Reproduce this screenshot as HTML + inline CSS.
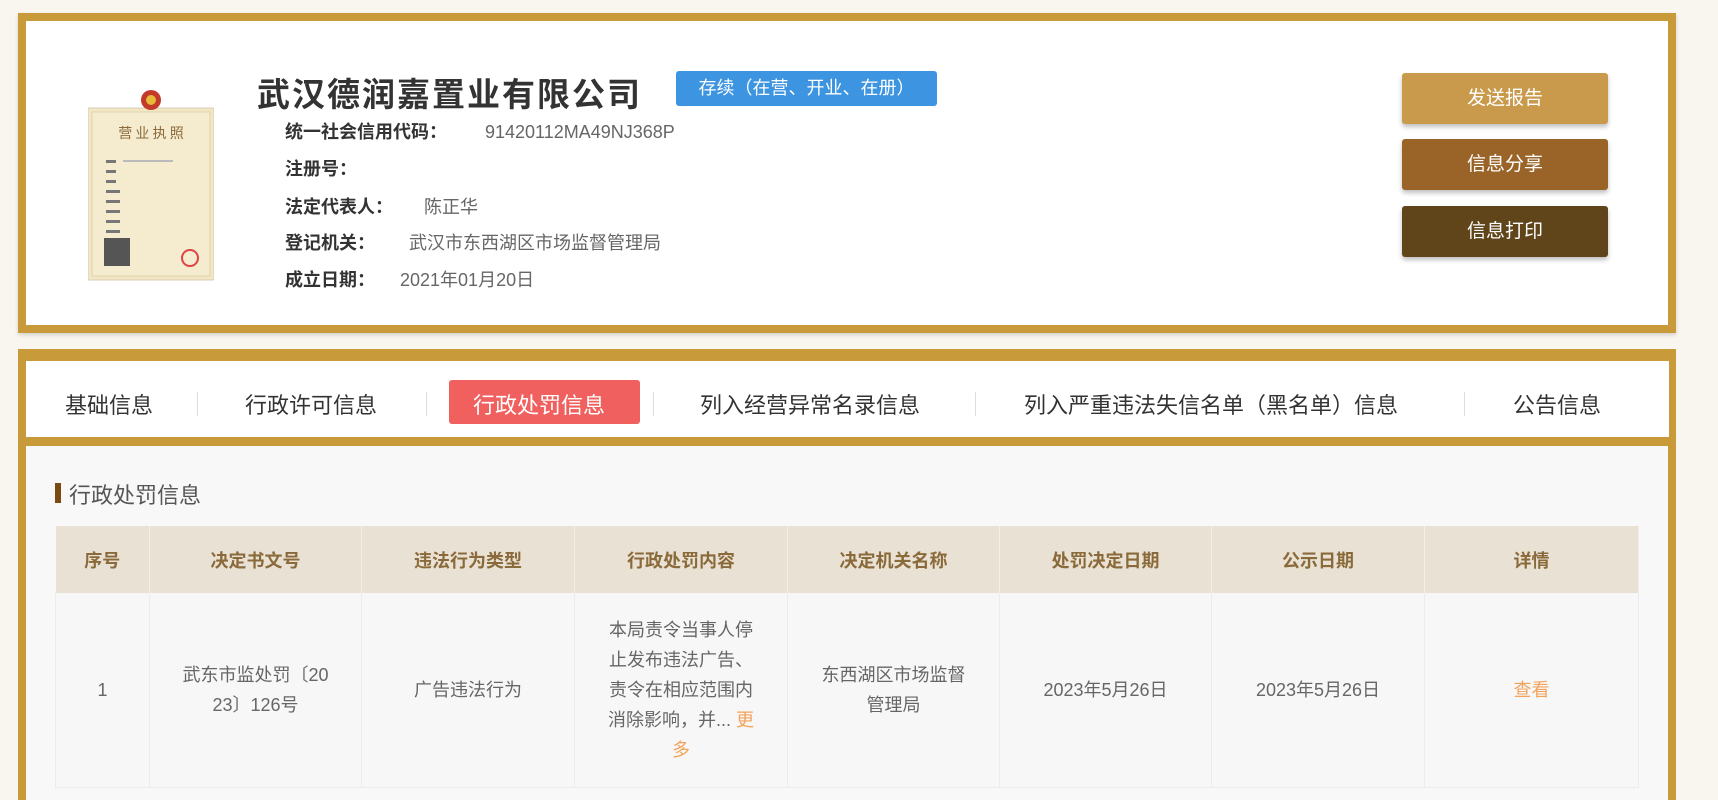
<!DOCTYPE html>
<html><head><meta charset="utf-8"><style>
*{margin:0;padding:0;box-sizing:border-box}
html{width:1718px;height:800px;overflow:hidden}
body{width:1718px;height:800px;background:#f9f6ef;font-family:"Liberation Sans","Noto Sans CJK SC",sans-serif;position:relative;overflow:hidden;color:#333}
.abs{position:absolute}
.p1{left:18px;top:13px;width:1658px;height:320px;border:8px solid #c99a3a;background:#fff;box-shadow:0 2px 4px rgba(0,0,0,.15)}
.lic{left:88px;top:88px;width:126px;height:195px}
.title{left:257px;top:68px;font-size:33px;font-weight:bold;color:#333;letter-spacing:2px}
.badge{left:676px;top:71px;width:261px;height:35px;background:#3d94e0;color:#fff;font-size:18px;line-height:35px;text-align:center;border-radius:3px}
.row{left:285px;font-size:18px;line-height:24px;font-weight:bold;color:#333}
.row span{font-weight:normal;color:#666;position:absolute;white-space:nowrap}
.btn{left:1402px;width:206px;height:51px;color:#fff;font-size:19px;line-height:51px;text-align:center;border-radius:3px;box-shadow:0 3px 5px rgba(0,0,0,.25)}
.p2{left:18px;top:349px;width:1658px;height:451px;border:8px solid #c99a3a;border-top-width:12px;border-bottom:0;background:#f8f8f8}
.tabs{left:26px;top:361px;width:1643px;height:85px;background:#fff;border-bottom:9px solid #c99a3a}
.tab{top:388px;font-size:22px;color:#333;white-space:nowrap}
.sep{top:392px;width:1px;height:24px;background:#ddd}
table{position:absolute;left:55px;top:526px;border-collapse:collapse;font-size:18px}
th{height:67px;background:#e9e1d3;color:#8a6a3a;font-weight:bold;border-right:1px solid #f4efe6}
td{height:194px;background:#f7f7f7;color:#666;text-align:center;line-height:30px;border-right:1px solid #ececec;border-bottom:1px solid #ececec;vertical-align:middle}
td:first-child{border-left:1px solid #ececec}
</style></head><body>
<div class="abs p1"></div>
<svg class="abs lic" viewBox="0 0 126 195">
<rect x="0" y="20" width="126" height="172" fill="#f2e6c4" stroke="#d8cfb4"/>
<rect x="4" y="24" width="118" height="164" fill="#f5ebcf" stroke="#e0d3ad"/>
<circle cx="63" cy="12" r="10" fill="#c23a2a"/><circle cx="63" cy="12" r="5" fill="#e8b83a"/>
<text x="63" y="50" font-size="14" text-anchor="middle" fill="#8b6a3a" font-family="Noto Sans CJK SC">营 业 执 照</text>
<g fill="#777"><rect x="18" y="72" width="10" height="3"/><rect x="35" y="72" width="50" height="2" fill="#bbb"/>
<rect x="18" y="82" width="10" height="3"/><rect x="18" y="92" width="10" height="3"/><rect x="18" y="102" width="14" height="3"/><rect x="18" y="112" width="14" height="3"/><rect x="18" y="122" width="14" height="3"/><rect x="18" y="132" width="14" height="3"/><rect x="18" y="142" width="14" height="3"/></g>
<rect x="16" y="150" width="26" height="28" fill="#555"/>
<circle cx="102" cy="170" r="8" fill="none" stroke="#d44" stroke-width="2"/>
</svg>
<div class="abs title">武汉德润嘉置业有限公司</div>
<div class="abs badge">存续（在营、开业、在册）</div>
<div class="abs row" style="top:120px">统一社会信用代码：<span style="left:200px">91420112MA49NJ368P</span></div>
<div class="abs row" style="top:157px">注册号：</div>
<div class="abs row" style="top:195px">法定代表人：<span style="left:139px">陈正华</span></div>
<div class="abs row" style="top:231px">登记机关：<span style="left:124px">武汉市东西湖区市场监督管理局</span></div>
<div class="abs row" style="top:268px">成立日期：<span style="left:115px">2021年01月20日</span></div>
<div class="abs btn" style="top:73px;background:#c99a4c">发送报告</div>
<div class="abs btn" style="top:139px;background:#9a6428">信息分享</div>
<div class="abs btn" style="top:206px;background:#5f4519">信息打印</div>

<div class="abs p2"></div>
<div class="abs tabs"></div>
<div class="abs" style="left:449px;top:380px;width:191px;height:44px;background:#f0605f;border-radius:3px"></div>
<div class="abs tab" style="left:65px">基础信息</div>
<div class="abs sep" style="left:197px"></div>
<div class="abs tab" style="left:245px">行政许可信息</div>
<div class="abs sep" style="left:426px"></div>
<div class="abs tab" style="left:473px;color:#fff">行政处罚信息</div>
<div class="abs sep" style="left:653px"></div>
<div class="abs tab" style="left:700px">列入经营异常名录信息</div>
<div class="abs sep" style="left:975px"></div>
<div class="abs tab" style="left:1024px">列入严重违法失信名单（黑名单）信息</div>
<div class="abs sep" style="left:1464px"></div>
<div class="abs tab" style="left:1513px">公告信息</div>

<div class="abs" style="left:55px;top:483px;width:6px;height:20px;background:#7a4a12"></div>
<div class="abs" style="left:69px;top:478px;font-size:22px;color:#555">行政处罚信息</div>

<table>
<tr><th style="width:94px">序号</th><th style="width:212px">决定书文号</th><th style="width:213px">违法行为类型</th><th style="width:213px">行政处罚内容</th><th style="width:212px">决定机关名称</th><th style="width:212px">处罚决定日期</th><th style="width:213px">公示日期</th><th style="width:214px">详情</th></tr>
<tr><td>1</td><td>武东市监处罚〔20<br>23〕126号</td><td>广告违法行为</td><td>本局责令当事人停<br>止发布违法广告、<br>责令在相应范围内<br>消除影响，并... <span style="color:#f3a35a">更<br>多</span></td><td>东西湖区市场监督<br>管理局</td><td>2023年5月26日</td><td>2023年5月26日</td><td style="color:#f3a35a">查看</td></tr>
</table>
</body></html>
